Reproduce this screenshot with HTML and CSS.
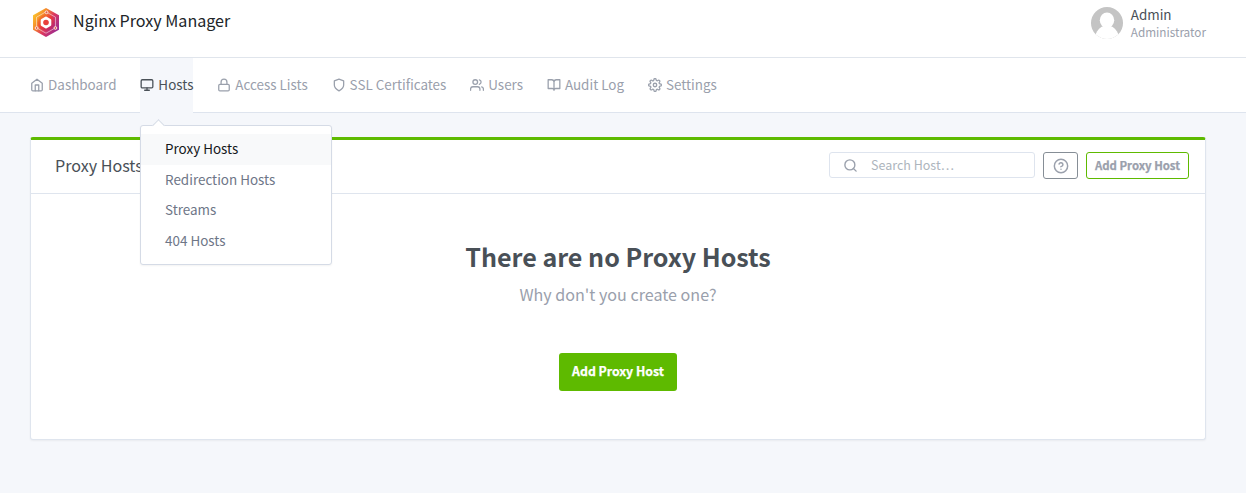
FILE: index.html
```html
<!DOCTYPE html>
<html lang="en">
<head>
<meta charset="utf-8">
<title>Nginx Proxy Manager</title>
<link rel="stylesheet" href="styles.css">
</head>
<body>
<header class="header">
  <a class="brand">
    <svg class="logo" viewBox="0 0 26 29">
      <defs>
        <linearGradient id="lg" x1="0" y1="0.15" x2="1" y2="0.85">
          <stop offset="0" stop-color="#fbd02c"/><stop offset=".3" stop-color="#f58a2c"/><stop offset=".58" stop-color="#dc3660"/><stop offset="1" stop-color="#8d2a9c"/>
        </linearGradient>
        <linearGradient id="lh" x1="0" y1="0" x2="1" y2="1">
          <stop offset="0" stop-color="#f9a21c"/><stop offset=".5" stop-color="#ea3a3a"/><stop offset="1" stop-color="#a51f8a"/>
        </linearGradient>
      </defs>
      <path d="M13 0 26 7.3V21.7L13 29 0 21.7V7.3z" fill="url(#lg)"/>
      <path d="M13 3.8 22.5 9.2V19.8L13 25.2 3.5 19.8V9.2z" fill="none" stroke="#fff" stroke-opacity=".55" stroke-width=".9"/>
      <circle cx="13" cy="14.5" r="8.300" fill="url(#lh)"/>
      <path d="M13 10 16.900 12.200V16.800L13 19 9.100 16.800V12.200z" fill="#fff" stroke="#fff" stroke-width="2.800" stroke-linejoin="round"/>
      <circle cx="13" cy="14.5" r="2.800" fill="#e8403c"/>
      <g fill="#e65a45" stroke="#fff" stroke-opacity=".85" stroke-width=".9"><circle cx="13.5" cy="4.3" r="1.4"/><circle cx="3.6" cy="20" r="1.4"/><circle cx="22.4" cy="20" r="1.4"/></g>
    </svg>
    <span class="brand-name">Nginx Proxy Manager</span>
  </a>
  <div class="account">
    <svg class="avatar" viewBox="0 0 32 32"><defs><clipPath id="av"><circle cx="16" cy="16" r="16"/></clipPath></defs><g clip-path="url(#av)"><path fill="#c4c4c4" d="M0 0h32v32H0z"/><ellipse cx="16" cy="13.3" rx="7.2" ry="7.8" fill="#fff"/><path d="M4.5 32V27.5C6.500 22.500 9.500 19.700 12.500 19H19.500C22.500 19.700 25.500 22.500 27.500 27.500V32z" fill="#fff"/></g></svg>
    <div class="who"><span class="user">Admin</span><span class="role">Administrator</span></div>
  </div>
</header>
<nav class="nav">
  <a class="tab"><svg class="icon" viewBox="0 0 24 24"><path d="M3 9l9-7 9 7v11a2 2 0 0 1-2 2H5a2 2 0 0 1-2-2z"/><path d="M9 22V12h6v10"/></svg><span class="label">Dashboard</span></a>
  <div class="tab active"><svg class="icon" viewBox="0 0 24 24"><rect x="2" y="3" width="20" height="14" rx="2"/><path d="M8 21h8M12 17v4"/></svg><span class="label">Hosts</span>
    <div class="menu">
      <a class="item current">Proxy Hosts</a>
      <a class="item">Redirection Hosts</a>
      <a class="item">Streams</a>
      <a class="item">404 Hosts</a>
    </div>
  </div>
  <a class="tab"><svg class="icon" viewBox="0 0 24 24"><rect x="3" y="11" width="18" height="11" rx="2"/><path d="M7 11V7a5 5 0 0 1 10 0v4"/></svg><span class="label">Access Lists</span></a>
  <a class="tab"><svg class="icon" viewBox="0 0 24 24"><path d="M12 22s8-4 8-10V5l-8-3-8 3v7c0 6 8 10 8 10z"/></svg><span class="label">SSL Certificates</span></a>
  <a class="tab"><svg class="icon" viewBox="0 0 24 24"><path d="M17 21v-2a4 4 0 0 0-4-4H5a4 4 0 0 0-4 4v2"/><circle cx="9" cy="7" r="4"/><path d="M23 21v-2a4 4 0 0 0-3-3.870M16 3.130a4 4 0 0 1 0 7.750"/></svg><span class="label">Users</span></a>
  <a class="tab"><svg class="icon" viewBox="0 0 24 24"><path d="M2 3h6a4 4 0 0 1 4 4v14a3 3 0 0 0-3-3H2zM22 3h-6a4 4 0 0 0-4 4v14a3 3 0 0 1 3-3h7z"/></svg><span class="label">Audit Log</span></a>
  <a class="tab"><svg class="icon" viewBox="0 0 24 24"><circle cx="12" cy="12" r="3"/><path d="M19.400 15a1.650 1.650 0 0 0 .33 1.820l.06.06a2 2 0 1 1-2.830 2.830l-.06-.06a1.650 1.650 0 0 0-2.800 1.170V21a2 2 0 0 1-4 0v-.09A1.650 1.650 0 0 0 7.180 19.730l-.06.06a2 2 0 1 1-2.830-2.830l.06-.06A1.650 1.650 0 0 0 3.090 14H3a2 2 0 0 1 0-4h.09A1.650 1.650 0 0 0 4.270 7.180l-.06-.06a2 2 0 1 1 2.830-2.830l.06.06A1.650 1.650 0 0 0 10 3.090V3a2 2 0 0 1 4 0v.09a1.650 1.650 0 0 0 2.820 1.180l.06-.06a2 2 0 1 1 2.830 2.830l-.06.06A1.650 1.650 0 0 0 20.910 10H21a2 2 0 0 1 0 4h-.09a1.650 1.650 0 0 0-1.510 1z"/></svg><span class="label">Settings</span></a>
</nav>
<main class="page">
  <section class="card">
    <div class="card-head">
      <h3 class="card-title">Proxy Hosts</h3>
      <div class="search"><svg class="icon" viewBox="0 0 24 24"><circle cx="11" cy="11" r="8"/><path d="M21 21l-4.350-4.350"/></svg><span>Search Host…</span></div>
      <button class="help"><svg class="icon" viewBox="0 0 24 24"><circle cx="12" cy="12" r="10"/><path d="M9.090 9a3 3 0 0 1 5.830 1c0 2-3 3-3 3M12 17h.01"/></svg></button>
      <button class="outline">Add Proxy Host</button>
    </div>
    <div class="empty">
      <h1 class="empty-title">There are no Proxy Hosts</h1>
      <p class="lead">Why don't you create one?</p>
      <button class="primary">Add Proxy Host</button>
    </div>
  </section>
</main>
</body>
</html>
```
FILE: styles.css
```css
* { box-sizing: border-box; }
body { margin: 0; height: 493px; overflow: hidden; background: #f5f7fb; color: #495057; font-family: "Noto Sans CJK SC", "Noto Sans", sans-serif; font-size: 13.43px; line-height: 24px; white-space: nowrap; }
h1, h3, p { margin: 0; }
button { font-family: inherit; padding: 0; cursor: pointer; }
.icon { display: block; flex: none; width: 14px; height: 14px; fill: none; stroke: currentColor; stroke-width: 2.2; stroke-linecap: round; stroke-linejoin: round; }
.header { height: 58px; padding: 0 40px 0 33px; display: flex; justify-content: space-between; background: #fff; border-bottom: 1px solid #e0e5ec; }
.brand { display: flex; gap: 14px; padding-top: 8px; color: #212529; }
.logo { width: 26px; height: 29px; }
.brand-name { font-size: 16.1px; line-height: 24px; }
.account { display: flex; gap: 8px; padding-top: 7px; }
.avatar { width: 32px; height: 32px; }
.who { display: flex; flex-direction: column; }
.user { line-height: 14px; }
.role { font-size: 11.75px; line-height: 22px; color: #9aa0ac; }
.nav { height: 55px; padding-left: 30px; display: flex; gap: 23.8px; background: #fff; border-bottom: 1px solid #dee4ee; color: #9aa0ac; }
.tab { position: relative; display: flex; align-items: center; gap: 4.1px; height: 55px; padding-bottom: 2px; }
.label { padding-bottom: 2px; }
.active { background: #f5f7fb; color: #495057; }
.menu { position: absolute; z-index: 2; left: 0; top: 67px; width: 192px; height: 140px; padding: 8px 0; background: #fff; border: 1px solid #d5dbe6; border-radius: 3px; box-shadow: 0 1px 2px rgba(0,0,0,.05); color: #6e7687; }
.menu::before { content: ""; position: absolute; left: 13px; top: -5px; width: 8px; height: 8px; background: #fff; border: solid #d5dbe6; border-width: 1px 0 0 1px; transform: rotate(45deg); }
.item { display: block; height: 30.5px; padding-left: 23.8px; line-height: 28px; }
.current { background: #f8f9fa; color: #16181b; }
.page { padding: 24px 40px 0 30px; }
.card { height: 303px; background: #fff; border: 1px solid #dfe5ee; border-top: 3px solid #5eba00; border-radius: 3px; box-shadow: 0 1px 2px rgba(0,0,0,.05); }
.card-head { height: 54px; padding: 12px 16px 0 24px; display: flex; border-bottom: 1px solid #dfe5ee; }
.card-title { flex: 1; font-size: 16.1px; font-weight: 400; line-height: 26px; }
.search { width: 206px; height: 26px; padding-left: 12.5px; display: flex; align-items: center; gap: 13.5px; border: 1px solid #dee4ee; border-radius: 3px; color: #adb5bd; font-size: 12.5px; }
.search .icon { width: 15px; height: 15px; color: #9aa0ac; }
.help { width: 35px; height: 27px; margin: 0 8px; padding-top: 1px; display: flex; align-items: center; justify-content: center; background: #fff; border: 1px solid #868e96; border-radius: 3px; color: #9aa0ac; }
.help .icon { width: 16px; height: 16px; }
.outline { width: 103px; height: 27px; padding-bottom: 2px; background: #fff; border: 1px solid #5eba00; border-radius: 3px; color: #9aa0ac; font-size: 11.4px; font-weight: 700; line-height: 22px; -webkit-text-stroke: .25px; }
.empty { display: flex; flex-direction: column; align-items: center; padding-top: 46px; }
.empty-title { font-size: 25.07px; font-weight: 700; line-height: 32px; }
.lead { margin-top: 9px; font-size: 16.1px; line-height: 26px; color: #9aa0ac; }
.primary { width: 118px; height: 38px; margin-top: 46px; padding-bottom: 2px; background: #5eba00; border: 0; border-radius: 3px; color: #fff; font-size: 12.3px; font-weight: 700; line-height: 36px; -webkit-text-stroke: .25px; }
```
